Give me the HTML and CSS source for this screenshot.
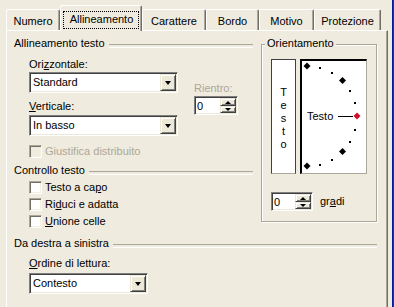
FILE: index.html
```html
<!DOCTYPE html>
<html lang="it">

<head>
    <meta charset="UTF-8">
    <meta name="viewport" content="width=device-width, initial-scale=1.0">
    <title>Formato celle</title>
    <link rel="stylesheet" href="styles.css">
</head>

<body>
    <div class="window">
        <div class="dialog">
            <div class="tabs">
                <div class="tab tab-numero">Numero</div>
                <div class="tab tab-active"><span class="focus">Allineamento</span></div>
                <div class="tab tab-carattere">Carattere</div>
                <div class="tab tab-bordo">Bordo</div>
                <div class="tab tab-motivo">Motivo</div>
                <div class="tab tab-protezione">Protezione</div>
            </div>
            <div class="panel">
                <div class="top-area">
                    <div class="left-col">
                        <div class="group-title">Allineamento testo</div>
                        <div class="align-row">
                            <div class="align-combos">
                                <div class="field-label">Ori<u>z</u>zontale:</div>
                                <div class="combo combo-wide">
                                    <span class="combo-value">Standard</span>
                                    <span class="drop-btn"></span>
                                </div>
                                <div class="field-label label-vertical"><u>V</u>erticale:</div>
                                <div class="combo combo-wide combo-vertical">
                                    <span class="combo-value">In basso</span>
                                    <span class="drop-btn"></span>
                                </div>
                            </div>
                            <div class="indent-box">
                                <div class="field-label disabled">Rientro:</div>
                                <div class="spin spin-indent">
                                    <span class="spin-value">0</span>
                                    <span class="spin-btns"><span class="spin-up"></span><span class="spin-down"></span></span>
                                </div>
                            </div>
                        </div>
                        <div class="check check-distributed disabled">
                            <span class="check-box"></span><span class="check-label">Giustifica distribuito</span>
                        </div>
                        <div class="group-title group-control">Controllo testo</div>
                        <div class="check check-first">
                            <span class="check-box"></span><span class="check-label">Testo a ca<u>p</u>o</span>
                        </div>
                        <div class="check">
                            <span class="check-box"></span><span class="check-label">Ri<u>d</u>uci e adatta</span>
                        </div>
                        <div class="check">
                            <span class="check-box"></span><span class="check-label"><u>U</u>nione celle</span>
                        </div>
                    </div>

                    <div class="orient">
                        <span class="orient-title">Orientamento</span>
                        <div class="orient-boxes">
                            <div class="vertical-text">
                                <div>T</div>
                                <div>e</div>
                                <div>s</div>
                                <div>t</div>
                                <div>o</div>
                            </div>
                            <div class="dial">
                                <svg class="dial-svg" width="64" height="112" viewBox="0 0 64 112">
                                    <!-- semicircle of angle markers, centre (5,55), radius 50 -->
                                    <polygon points="5,1.5 8.5,5 5,8.5 1.5,5" fill="#000" />
                                    <rect x="17" y="6" width="2" height="2" fill="#000" />
                                    <rect x="29" y="11" width="2" height="2" fill="#000" />
                                    <polygon points="40.5,16 44,19.5 40.5,23 37,19.5" fill="#000" />
                                    <rect x="47" y="29" width="2" height="2" fill="#000" />
                                    <rect x="52" y="41" width="2" height="2" fill="#000" />
                                    <rect x="52" y="68" width="2" height="2" fill="#000" />
                                    <rect x="47" y="80" width="2" height="2" fill="#000" />
                                    <polygon points="40.5,87 44,90.5 40.5,94 37,90.5" fill="#000" />
                                    <rect x="29" y="98" width="2" height="2" fill="#000" />
                                    <rect x="17" y="103" width="2" height="2" fill="#000" />
                                    <polygon points="5,101.5 8.5,105 5,108.5 1.5,105" fill="#000" />
                                    <text class="dial-text" x="5" y="59">Testo</text>
                                    <line x1="36" y1="55.5" x2="51" y2="55.5" stroke="#000" stroke-width="1" />
                                    <polygon points="55,51.5 58.5,55 55,58.5 51.5,55" fill="#D0102C" />
                                </svg>
                            </div>
                        </div>
                        <div class="degrees">
                            <div class="spin spin-degrees">
                                <span class="spin-value">0</span>
                                <span class="spin-btns"><span class="spin-up"></span><span class="spin-down"></span></span>
                            </div>
                            <span class="degrees-label">gr<u>a</u>di</span>
                        </div>
                    </div>
                </div>

                <div class="group-title group-rtl">Da destra a sinistra</div>
                <div class="field-label label-order"><u>O</u>rdine di lettura:</div>
                <div class="combo combo-order">
                    <span class="combo-value">Contesto</span>
                    <span class="drop-btn"></span>
                </div>
            </div>
        </div>
        <div class="frame-edge"></div>
    </div>
</body>

</html>
```

FILE: styles.css
```css
* {
    box-sizing: border-box;
}

body {
    margin: 0;
    background-color: #efebde;
    font-family: "Liberation Sans", Arial, sans-serif;
    font-size: 11px;
    line-height: 13px;
    color: #000;
}

u {
    text-decoration: underline;
    text-underline-offset: 1px;
}

.window {
    display: flex;
    width: 394px;
    height: 307px;
    overflow: hidden;
}

.dialog {
    flex: 1;
    padding: 5px 4px 0 6px;
}

.frame-edge {
    width: 3px;
    background-color: #0831d9;
    border-left: 1px solid #001ea0;
}

/* tab strip */
.tabs {
    display: flex;
    align-items: flex-end;
    height: 25px;
    position: relative;
    z-index: 1;
}

.tab {
    height: 21px;
    padding-top: 5px;
    text-align: center;
    white-space: nowrap;
    background-color: #efebde;
    border-top: 1px solid #fff;
    border-left: 1px solid #fff;
    border-right: 1px solid #716f64;
    border-radius: 2px 2px 0 0;
    box-shadow: inset -1px 0 0 #aca899;
}

.tab-numero { width: 54px; }
.tab-carattere { width: 64px; }
.tab-bordo { width: 53px; }
.tab-motivo { width: 55px; }
.tab-protezione { width: 67px; }

.tab-active {
    width: 82px;
    height: 26px;
    margin-bottom: -1px;
    padding-top: 5px;
}

.focus {
    display: inline-block;
    padding: 1px 5px 2px 6px;
    border: 1px dotted #000;
}

/* tab page */
.panel {
    height: 277px;
    padding: 6px 10px 0 7px;
    border-top: 1px solid #fff;
    border-left: 1px solid #fff;
    border-right: 1px solid #716f64;
    box-shadow: inset -1px 0 0 #aca899;
}

.top-area {
    display: flex;
    gap: 8px;
}

.left-col {
    width: 239px;
}

.group-title {
    display: flex;
    align-items: flex-start;
    gap: 4px;
    height: 13px;
    white-space: nowrap;
}

.group-title::after {
    content: "";
    flex: 1;
    margin-top: 7px;
    height: 2px;
    border-top: 1px solid #aca899;
    border-bottom: 1px solid #fff;
}

.group-control { margin-top: 6px; }
.group-rtl { margin-top: 9px; }

.field-label {
    padding-left: 15px;
    white-space: nowrap;
}

.disabled {
    color: #aca899;
}

.align-row {
    display: flex;
    margin-top: 8px;
}

.label-vertical { margin-top: 7px; }

.label-order { margin-top: 7px; }

/* combo boxes */
.combo {
    display: flex;
    align-items: center;
    height: 21px;
    margin: 1px 0 0 15px;
    padding: 1px 0 1px 2px;
    background-color: #fff;
    border-top: 1px solid #808080;
    border-left: 1px solid #808080;
    border-right: 1px solid #fff;
    border-bottom: 1px solid #fff;
    box-shadow: inset 1px 1px 0 #404040, inset -1px -1px 0 #ece9d8;
}

.combo-wide { width: 149px; }
.combo-vertical { margin-top: 2px; }
.combo-order { width: 119px; margin-top: 3px; }

.combo-value {
    flex: 1;
    padding-left: 1px;
}

.drop-btn {
    position: relative;
    width: 16px;
    height: 17px;
    margin-right: 1px;
    background-color: #ece9d8;
    border-top: 1px solid #ece9d8;
    border-left: 1px solid #ece9d8;
    border-right: 1px solid #404040;
    border-bottom: 1px solid #404040;
    box-shadow: inset 1px 1px 0 #fff, inset -1px -1px 0 #808080;
}

.drop-btn::after {
    content: "";
    position: absolute;
    left: 4px;
    top: 6px;
    border-left: 3.5px solid transparent;
    border-right: 3.5px solid transparent;
    border-top: 4px solid #000;
}

/* spin boxes */
.indent-box {
    margin-left: 16px;
    padding-top: 24px;
}

.indent-box .field-label {
    padding-left: 0;
}

.spin {
    display: flex;
    height: 19px;
    margin-top: 1px;
    padding: 1px 1px 1px 2px;
    background-color: #fff;
    border-top: 1px solid #808080;
    border-left: 1px solid #808080;
    border-right: 1px solid #fff;
    border-bottom: 1px solid #fff;
    box-shadow: inset 1px 1px 0 #404040, inset -1px -1px 0 #ece9d8;
}

.spin-indent { width: 44px; }
.spin-degrees { width: 42px; margin-top: 0; }

.spin-value {
    flex: 1;
    padding-top: 2px;
}

.spin-btns {
    display: flex;
    flex-direction: column;
    width: 16px;
}

.spin-up,
.spin-down {
    position: relative;
    flex: 1;
    background-color: #ece9d8;
    border-top: 1px solid #ece9d8;
    border-left: 1px solid #ece9d8;
    border-right: 1px solid #404040;
    border-bottom: 1px solid #404040;
    box-shadow: inset 1px 1px 0 #fff, inset -1px -1px 0 #808080;
}

.spin-up::after,
.spin-down::after {
    content: "";
    position: absolute;
    left: 4px;
    border-left: 3px solid transparent;
    border-right: 3px solid transparent;
}

.spin-up::after {
    top: 2px;
    border-bottom: 3px solid #000;
}

.spin-down::after {
    top: 1px;
    border-top: 3px solid #000;
}

/* check boxes */
.check {
    display: flex;
    align-items: center;
    gap: 3px;
    height: 13px;
    margin-top: 4px;
    padding-left: 15px;
    white-space: nowrap;
}

.check-distributed { margin-top: 9px; }
.check-first { margin-top: 4px; }

.check-box {
    width: 13px;
    height: 13px;
    background-color: #fff;
    border-top: 1px solid #aca899;
    border-left: 1px solid #aca899;
    border-right: 1px solid #fff;
    border-bottom: 1px solid #fff;
    box-shadow: inset 1px 1px 0 #716f64, inset -1px -1px 0 #f1efe2;
}

.check.disabled .check-box {
    background-color: #efebde;
}

/* orientation group */
.orient {
    position: relative;
    width: 116px;
    height: 178px;
    margin-top: 7px;
    padding: 14px 0 0 9px;
    border: 1px solid #aca899;
    box-shadow: inset 1px 1px 0 #fff, 1px 1px 0 #fff;
}

.orient-title {
    position: absolute;
    top: -8px;
    left: 3px;
    padding: 0 2px;
    background-color: #efebde;
}

.orient-boxes {
    display: flex;
    gap: 4px;
}

.vertical-text {
    width: 25px;
    height: 115px;
    padding-top: 26px;
    text-align: center;
    background-color: #fff;
    border: 1px solid #404040;
    border-bottom-color: #aca899;
}

.dial {
    position: relative;
    width: 67px;
    height: 115px;
    background-color: #fff;
    border-top: 2px solid #000;
    border-left: 2px solid #000;
    border-right: 1px solid #aca899;
    border-bottom: 1px solid #aca899;
}

.dial-svg {
    display: block;
}

.dial-text {
    font-family: "Liberation Sans", Arial, sans-serif;
    font-size: 11px;
}

.degrees {
    display: flex;
    align-items: center;
    gap: 7px;
    margin-top: 18px;
}
```
